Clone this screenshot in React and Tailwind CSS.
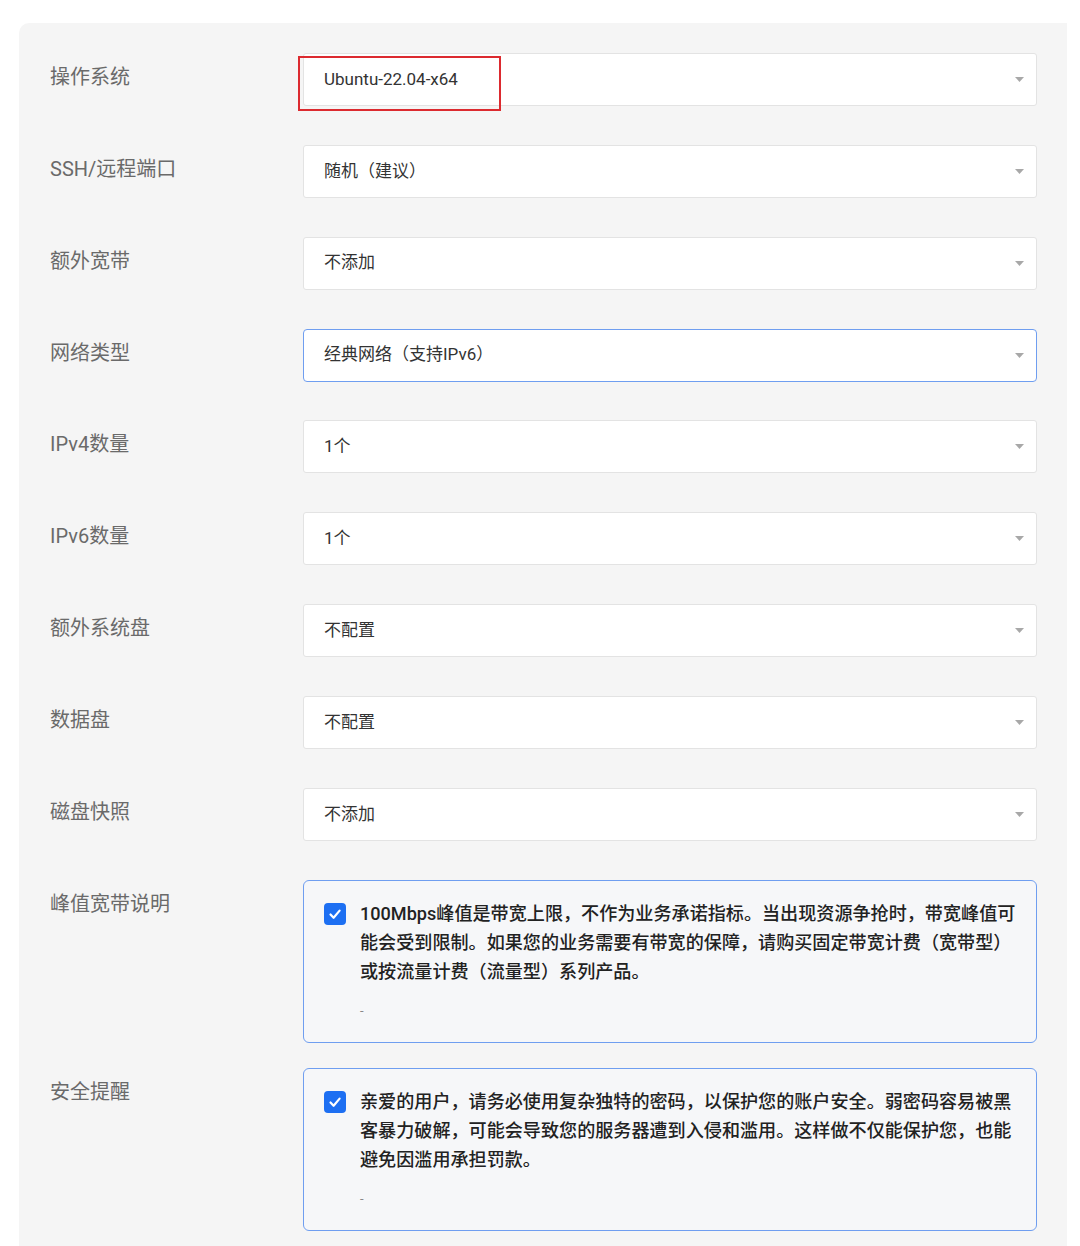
import React from 'react'

const FONT = { fontFamily: 'Roboto, "Noto Sans CJK SC", "Noto Sans", sans-serif' }

const rows = [
  { label: '操作系统', value: 'Ubuntu-22.04-x64', marked: true },
  { label: 'SSH/远程端口', value: '随机（建议）' },
  { label: '额外宽带', value: '不添加' },
  { label: '网络类型', value: '经典网络（支持IPv6）', focused: true },
  { label: 'IPv4数量', value: '1个' },
  { label: 'IPv6数量', value: '1个' },
  { label: '额外系统盘', value: '不配置' },
  { label: '数据盘', value: '不配置' },
  { label: '磁盘快照', value: '不添加' },
]

const notices = [
  {
    label: '峰值宽带说明',
    lines: [
      '100Mbps峰值是带宽上限，不作为业务承诺指标。当出现资源争抢时，带宽峰值可',
      '能会受到限制。如果您的业务需要有带宽的保障，请购买固定带宽计费（宽带型）',
      '或按流量计费（流量型）系列产品。',
    ],
  },
  {
    label: '安全提醒',
    lines: [
      '亲爱的用户，请务必使用复杂独特的密码，以保护您的账户安全。弱密码容易被黑',
      '客暴力破解，可能会导致您的服务器遭到入侵和滥用。这样做不仅能保护您，也能',
      '避免因滥用承担罚款。',
    ],
  },
]

function Caret() {
  return (
    <svg width="9" height="5" viewBox="0 0 9 5" className="shrink-0">
      <path d="M0 0 H9 L4.5 5 Z" fill="#a8a8a8" />
    </svg>
  )
}

function Check() {
  return (
    <svg width="22" height="22" viewBox="0 0 22 22" className="shrink-0">
      <rect width="22" height="22" rx="4" fill="#1d6ff2" />
      <path d="M6.5 11.5 L9.6 14.8 L15.6 7.6" stroke="#fff" strokeWidth="2.2" fill="none" strokeLinecap="round" strokeLinejoin="round" />
    </svg>
  )
}

function SelectRow({ label, value, marked, focused }) {
  return (
    <div className="flex items-start mb-[38.85px]">
      <div className="w-[253px] shrink-0 pt-[10px] text-[20px] leading-[28px] text-[#6a6a6a]">{label}</div>
      <div className="relative flex-1">
        <div
          className={`h-[53px] flex items-center justify-between pl-[20px] pr-[12px] bg-white text-[17px] text-[#333] ${
            focused ? 'border border-[#6f9ef0] rounded-[4px]' : 'border border-[#e3e3e3] rounded-[3px]'
          }`}
        >
          <span>{value}</span>
          <Caret />
        </div>
        {marked ? (
          <div className="absolute left-[-5px] top-[3px] w-[203px] h-[55px] border-2 border-[#dc2a2f]" />
        ) : null}
      </div>
    </div>
  )
}

function NoticeRow({ label, lines, last }) {
  return (
    <div className={`flex items-start ${last ? '' : 'mb-[25px]'}`}>
      <div className="w-[253px] shrink-0 pt-[10px] text-[20px] leading-[28px] text-[#6a6a6a]">{label}</div>
      <div className="flex-1 h-[163px] border border-[#6f9ef0] rounded-[6px] bg-[#f6f7f9] pt-[18px] pl-[20px]">
        <div className="flex items-start gap-[14px]">
          <div className="pt-[4px]">
            <Check />
          </div>
          <div>
            <div className="text-[18.1px] leading-[29px] font-medium text-[#222]">
              {lines.map((l) => (
                <div key={l} className="whitespace-nowrap">{l}</div>
              ))}
            </div>
            <div className="mt-[18px] text-[13px] leading-[14px] text-[#888]">-</div>
          </div>
        </div>
      </div>
    </div>
  )
}

export default function App() {
  return (
    <div className="min-h-[1246px] bg-white pt-[23px] pl-[19px] pr-[13px] overflow-hidden" style={FONT}>
      <div className="bg-[#f5f5f5] rounded-tl-[10px] pt-[30px] pl-[31px] pr-[30px] pb-[40px]">
        {rows.map((r) => (
          <SelectRow key={r.label} {...r} />
        ))}
        {notices.map((n, i) => (
          <NoticeRow key={n.label} {...n} last={i === notices.length - 1} />
        ))}
      </div>
    </div>
  )
}
